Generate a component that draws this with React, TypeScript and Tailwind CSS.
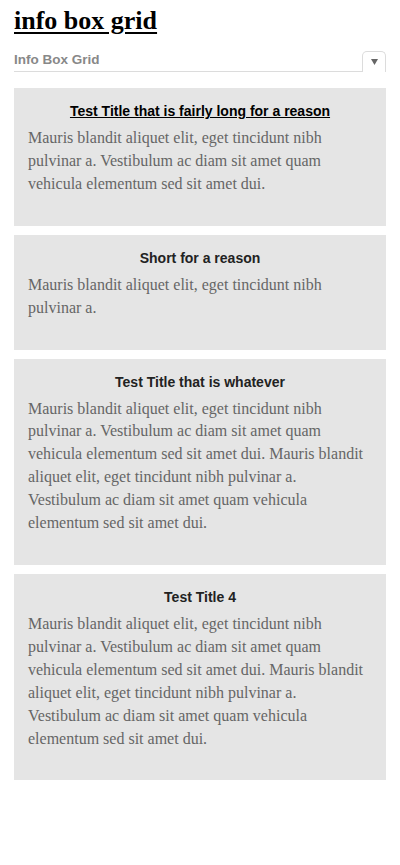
const boxes = [
  {
    title: 'Test Title that is fairly long for a reason',
    link: true,
    body: 'Mauris blandit aliquet elit, eget tincidunt nibh pulvinar a. Vestibulum ac diam sit amet quam vehicula elementum sed sit amet dui.',
  },
  {
    title: 'Short for a reason',
    link: false,
    body: 'Mauris blandit aliquet elit, eget tincidunt nibh pulvinar a.',
  },
  {
    title: 'Test Title that is whatever',
    link: false,
    body: 'Mauris blandit aliquet elit, eget tincidunt nibh pulvinar a. Vestibulum ac diam sit amet quam vehicula elementum sed sit amet dui. Mauris blandit aliquet elit, eget tincidunt nibh pulvinar a. Vestibulum ac diam sit amet quam vehicula elementum sed sit amet dui.',
  },
  {
    title: 'Test Title 4',
    link: false,
    body: 'Mauris blandit aliquet elit, eget tincidunt nibh pulvinar a. Vestibulum ac diam sit amet quam vehicula elementum sed sit amet dui. Mauris blandit aliquet elit, eget tincidunt nibh pulvinar a. Vestibulum ac diam sit amet quam vehicula elementum sed sit amet dui.',
  },
];

export default function App() {
  return (
    <div className="min-h-[865px] bg-white px-[14px] pt-[6px]">
      <h1 className="font-['Liberation_Serif',serif] text-[26px] font-bold leading-[30px] text-black underline decoration-2 underline-offset-[3px]">
        <a href="#">info box grid</a>
      </h1>

      <div className="mt-[15px] flex items-end border-b border-[#dcdcdc]">
        <span className="flex-1 pb-[3px] font-['Liberation_Sans',sans-serif] text-[13.5px] font-bold leading-[16px] text-[#888]">
          Info Box Grid
        </span>
        <button className="mb-[-1px] flex h-[21px] w-[24px] items-center justify-center rounded-t-[5px] border border-b-0 border-[#dcdcdc] bg-white">
          <svg width="7" height="6" viewBox="0 0 7 6">
            <path d="M0 0h7L3.5 6z" fill="#666" />
          </svg>
        </button>
      </div>

      <div className="mt-[16px] flex flex-col gap-[9px]">
        {boxes.map((box) => (
          <div key={box.title} className="bg-[#e5e5e5] px-[14px] pt-[14px] pb-[15px]">
            <h3 className="text-center font-['Liberation_Sans',sans-serif] text-[14px] font-bold leading-[18px] text-[#222]">
              {box.link ? (
                <a href="#" className="text-black underline">
                  {box.title}
                </a>
              ) : (
                box.title
              )}
            </h3>
            <p className="mt-[7px] mb-[15px] font-['Liberation_Serif',serif] text-[16px] leading-[22.9px] text-[#666]">
              {box.body}
            </p>
          </div>
        ))}
      </div>
    </div>
  );
}
